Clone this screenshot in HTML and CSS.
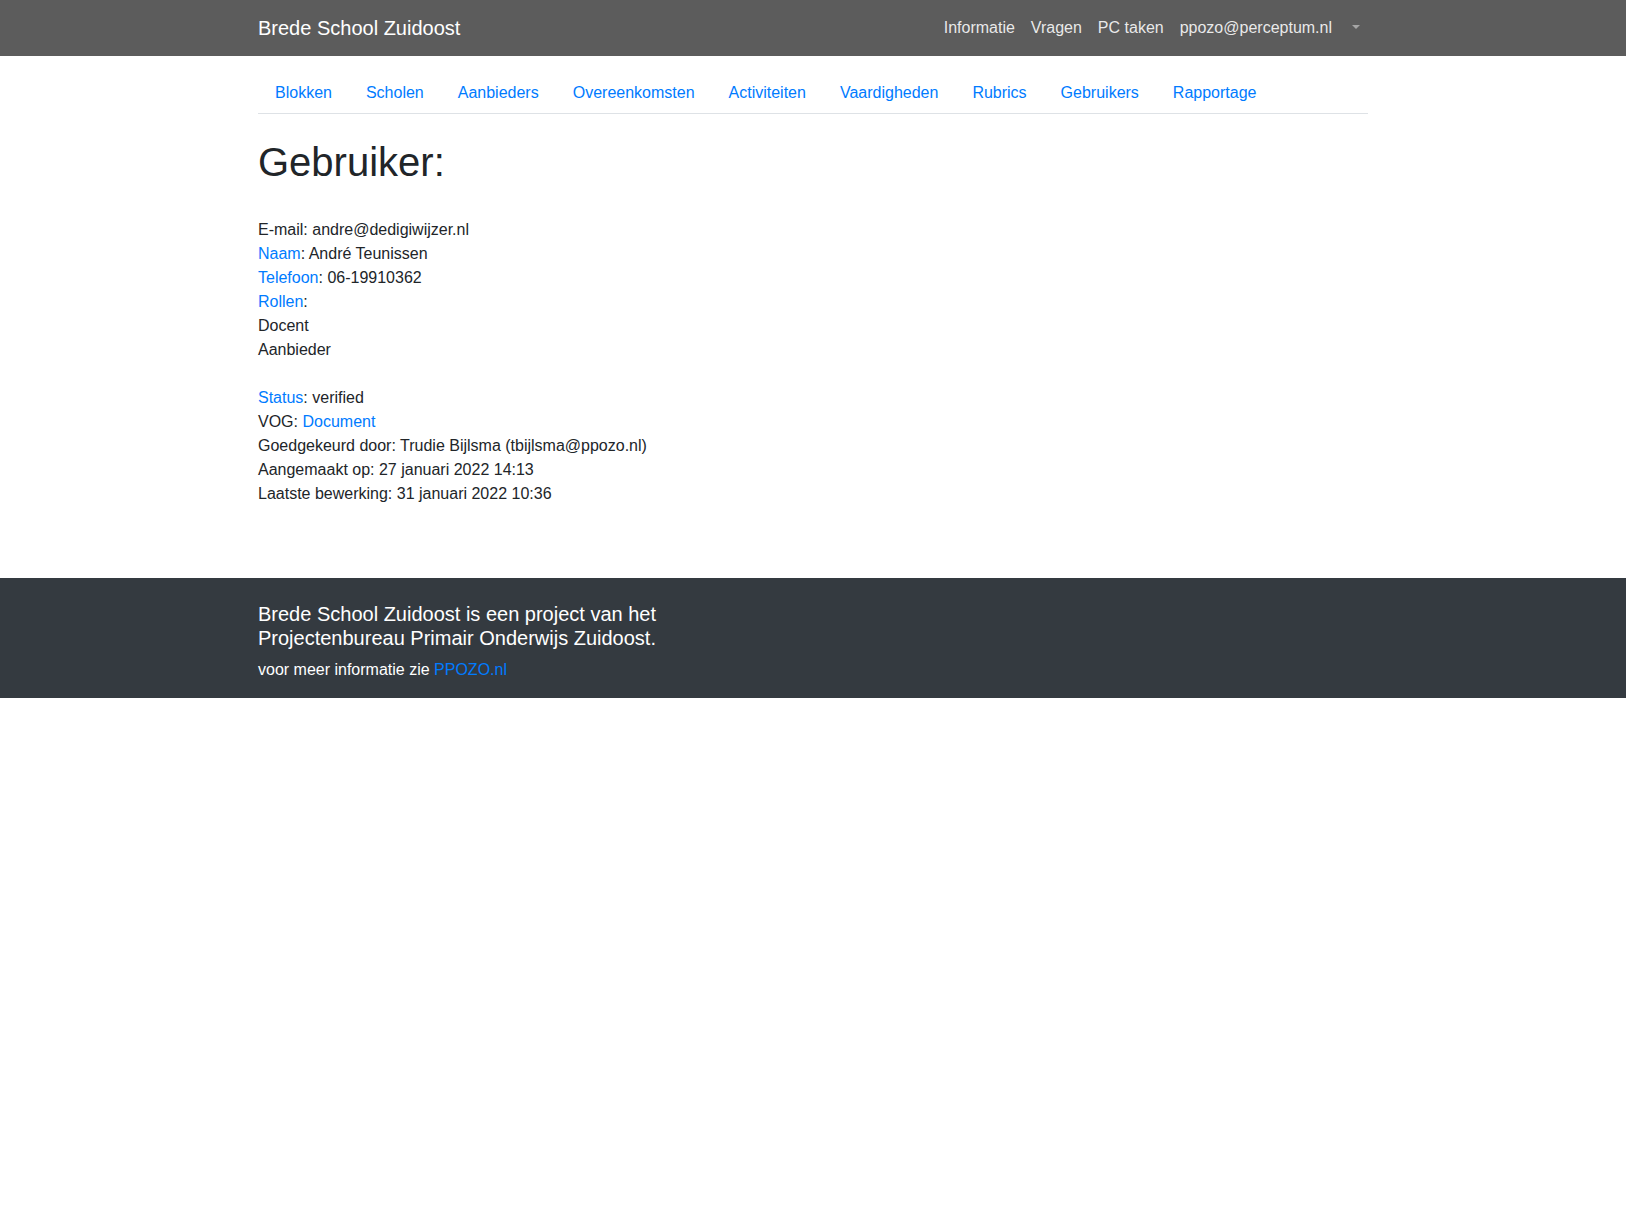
FILE: index.html
```html
<!DOCTYPE html>
<html lang="nl">
<head>
<meta charset="utf-8">
<title>Brede School Zuidoost</title>
<link rel="stylesheet" href="styles.css">
</head>
<body>
<header class="topbar">
  <div class="container topbar-inner">
    <a class="brand" href="#">Brede School Zuidoost</a>
    <nav class="topnav">
      <a class="topnav-link" href="#">Informatie</a>
      <a class="topnav-link" href="#">Vragen</a>
      <a class="topnav-link" href="#">PC taken</a>
      <a class="topnav-link" href="#">ppozo@perceptum.nl</a>
      <a class="topnav-link toggle" href="#"><span class="caret"></span></a>
    </nav>
  </div>
</header>

<main class="container main">
  <ul class="tabs">
    <li class="tab-item"><a class="tab-link" href="#">Blokken</a></li>
    <li class="tab-item"><a class="tab-link" href="#">Scholen</a></li>
    <li class="tab-item"><a class="tab-link" href="#">Aanbieders</a></li>
    <li class="tab-item"><a class="tab-link" href="#">Overeenkomsten</a></li>
    <li class="tab-item"><a class="tab-link" href="#">Activiteiten</a></li>
    <li class="tab-item"><a class="tab-link" href="#">Vaardigheden</a></li>
    <li class="tab-item"><a class="tab-link" href="#">Rubrics</a></li>
    <li class="tab-item"><a class="tab-link" href="#">Gebruikers</a></li>
    <li class="tab-item"><a class="tab-link" href="#">Rapportage</a></li>
  </ul>

  <h1 class="title">Gebruiker:</h1>

  <div class="details">
    <div>E-mail: andre@dedigiwijzer.nl</div>
    <div><a href="#">Naam</a>: André Teunissen</div>
    <div><a href="#">Telefoon</a>: 06-19910362</div>
    <div><a href="#">Rollen</a>:</div>
    <div>Docent</div>
    <div>Aanbieder</div>
    <div class="blank"></div>
    <div><a href="#">Status</a>: verified</div>
    <div>VOG: <a href="#">Document</a></div>
    <div>Goedgekeurd door: Trudie Bijlsma (tbijlsma@ppozo.nl)</div>
    <div>Aangemaakt op: 27 januari 2022 14:13</div>
    <div>Laatste bewerking: 31 januari 2022 10:36</div>
  </div>
</main>

<footer class="footer">
  <div class="container">
    <h5 class="footer-title">Brede School Zuidoost is een project van het<br>Projectenbureau Primair Onderwijs Zuidoost.</h5>
    <p class="footer-text">voor meer informatie zie <a href="#">PPOZO.nl</a></p>
  </div>
</footer>
</body>
</html>
```

FILE: styles.css
```css
* { box-sizing: border-box; }

body {
  margin: 0;
  font-family: "Liberation Sans", Arial, sans-serif;
  font-size: 16px;
  line-height: 1.5;
  color: #212529;
  background: #fff;
}

a { color: #007bff; text-decoration: none; }

.container {
  width: 1140px;
  margin: 0 auto;
  padding: 0 15px;
}

.topbar {
  background: #5c5c5c;
  height: 56px;
}

.topbar-inner {
  display: flex;
  align-items: center;
  justify-content: space-between;
  height: 56px;
}

.brand {
  color: #fff;
  font-size: 20px;
  line-height: 30px;
}

.topnav {
  display: flex;
  align-items: center;
}

.topnav-link {
  color: rgba(255, 255, 255, 0.88);
  padding: 8px;
  line-height: 24px;
}

.toggle { display: flex; align-items: center; height: 40px; }

.caret {
  display: inline-block;
  margin-left: 4px;
  width: 0;
  height: 0;
  border-top: 4px solid rgba(255, 255, 255, 0.45);
  border-left: 4px solid transparent;
  border-right: 4px solid transparent;
  margin-top: -2px;
}

.main { padding-top: 16px; }

.tabs {
  display: flex;
  list-style: none;
  margin: 0;
  padding: 0;
  border-bottom: 1px solid #dee2e6;
}

.tab-item { margin-bottom: -1px; }

.tab-link {
  display: block;
  padding: 8px 16px;
  border: 1px solid transparent;
  line-height: 24px;
}

.title {
  font-size: 40px;
  font-weight: 500;
  line-height: 1.2;
  margin: 24px 0 0;
}

.details {
  padding-top: 32px;
  padding-bottom: 72px;
}

.blank { height: 24px; }

.footer {
  background: #343a40;
  color: #fff;
  padding: 24px 0 16px;
}

.footer-title {
  font-size: 20px;
  font-weight: 400;
  line-height: 1.2;
  margin: 0 0 8px;
}

.footer-text { margin: 0; }
```
